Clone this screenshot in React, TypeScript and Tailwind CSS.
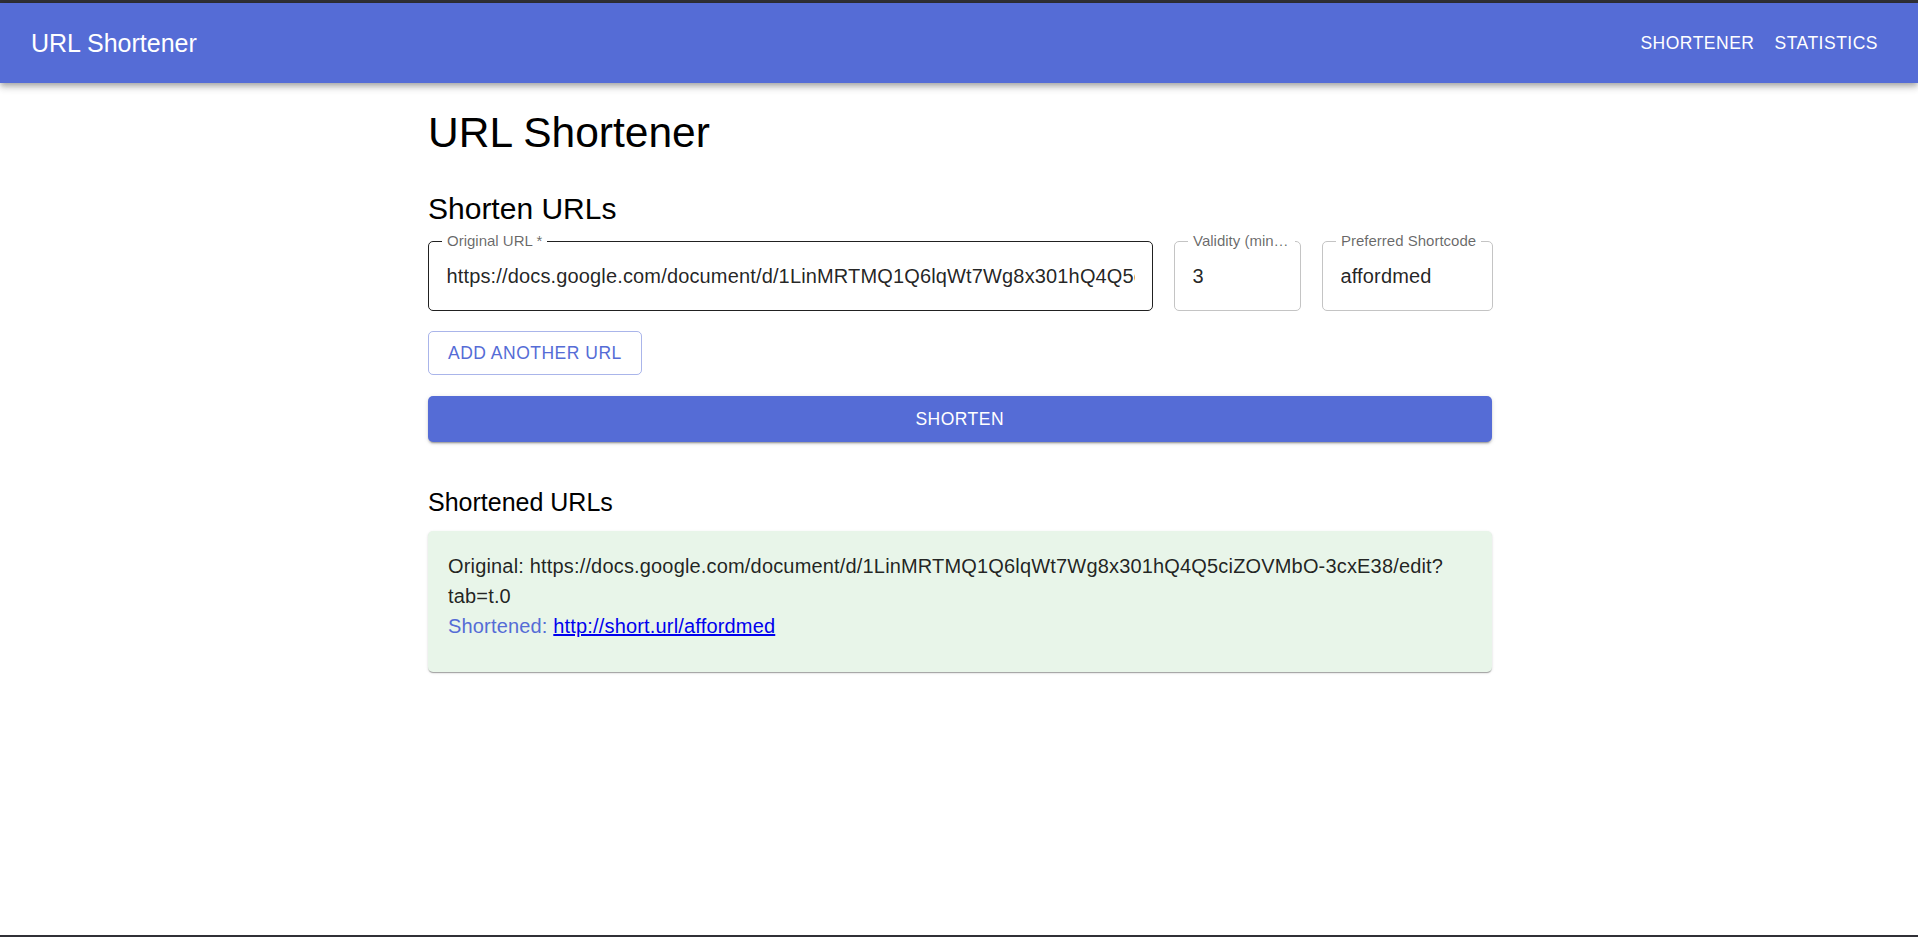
const longUrl =
  "https://docs.google.com/document/d/1LinMRTMQ1Q6lqWt7Wg8x301hQ4Q5ciZOVMbO-3cxE38/edit?tab=t.0";

const fields = [
  { label: "Original URL *", value: longUrl, width: "w-[725px]", active: true },
  { label: "Validity (minutes)", value: "3", width: "w-[127px]", active: false },
  { label: "Preferred Shortcode", value: "affordmed", width: "w-[171px]", active: false },
];

function Field({ label, value, width, active }: { label: string; value: string; width: string; active: boolean }) {
  return (
    <div
      className={`relative h-[70px] shrink-0 rounded-[5px] border ${width} ${
        active ? "border-[rgba(0,0,0,0.87)]" : "border-[#c4c4c4]"
      }`}
    >
      <span className="absolute left-[13px] top-[-10px] max-w-[calc(100%-18px)] truncate bg-white px-[5px] text-[15px] leading-[18px] text-[rgba(0,0,0,0.6)]">
        {label}
      </span>
      <input
        readOnly
        value={value}
        className="h-full w-full bg-transparent px-[17.5px] text-[20px] tracking-[0.15px] text-[rgba(0,0,0,0.87)] outline-none"
      />
    </div>
  );
}

export default function App() {
  return (
    <div className="flex h-[937px] flex-col overflow-hidden bg-white font-['Liberation_Sans',Arial,sans-serif]">
      <div className="h-[3px] bg-[#303036]" />

      {/* App bar */}
      <header className="relative z-10 flex h-[80px] items-center justify-between bg-[#556cd6] px-[30px] text-white shadow-[0_2.5px_5px_-1px_rgba(0,0,0,0.2),0_5px_6px_0_rgba(0,0,0,0.14),0_1px_12px_0_rgba(0,0,0,0.12)]">
        <div className="pl-px text-[25px] leading-[40px]">URL Shortener</div>
        <nav className="flex">
          <button className="px-[10px] py-[7.5px] text-[17.5px] font-medium uppercase tracking-[0.5px]">Shortener</button>
          <button className="px-[10px] py-[7.5px] text-[17.5px] font-medium uppercase tracking-[0.5px]">Statistics</button>
        </nav>
      </header>

      <main className="mx-auto flex w-[1065px] flex-1 flex-col pt-[24px] pl-[1.5px] text-[rgba(0,0,0,0.87)]">
        <h1 className="text-[42.5px] leading-[52px] text-black">URL Shortener</h1>
        <h2 className="mt-[30px] text-[30px] leading-[40px] text-black">Shorten URLs</h2>

        <div className="mt-[12px] flex gap-[21px]">
          {fields.map((f) => (
            <Field key={f.label} {...f} />
          ))}
        </div>

        <div className="mt-[20px]">
          <button className="h-[44px] rounded-[5px] border border-[rgba(85,108,214,0.5)] px-[19px] text-[17.5px] font-medium uppercase tracking-[0.5px] text-[#556cd6]">
            Add another URL
          </button>
        </div>

        <button className="mt-[21px] h-[46px] w-full rounded-[5px] bg-[#556cd6] text-[17.5px] font-medium uppercase tracking-[0.5px] text-white shadow-[0_3px_1px_-2px_rgba(0,0,0,0.2),0_2px_2px_0_rgba(0,0,0,0.14),0_1px_5px_0_rgba(0,0,0,0.12)]">
          Shorten
        </button>

        <h3 className="mt-[40px] text-[25px] leading-[40px] text-black">Shortened URLs</h3>

        <div className="mt-[9px] rounded-[5px] bg-[#e8f5e9] px-[20px] pt-[20px] pb-[31px] text-[20px] leading-[30px] tracking-[0.17px] shadow-[0_2px_1px_-1px_rgba(0,0,0,0.2),0_1px_1px_0_rgba(0,0,0,0.14),0_1px_3px_0_rgba(0,0,0,0.12)]">
          <p className="break-words">Original: {longUrl}</p>
          <p className="text-[#556cd6]">
            Shortened:{" "}
            <a href="#" className="text-[#0000ee] underline">
              http://short.url/affordmed
            </a>
          </p>
        </div>
      </main>

      <div className="h-[2px] bg-[#303036]" />
    </div>
  );
}
